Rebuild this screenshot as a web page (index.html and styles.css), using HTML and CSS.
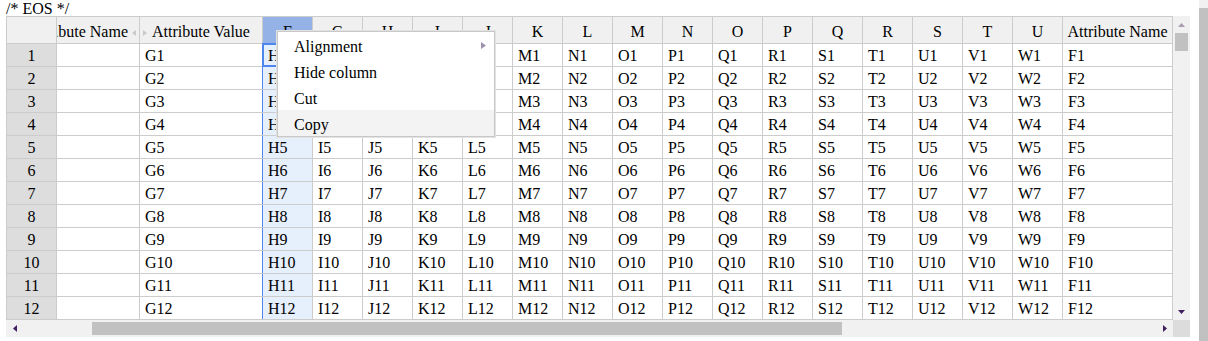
FILE: index.html
```html
<!DOCTYPE html>
<html lang="en">
<head>
    <meta charset="UTF-8">
    <title>EOS sheet</title>
    <meta name="viewport" content="width=device-width, initial-scale=1.0">
    <link rel="stylesheet" href="styles.css">
</head>
<body>
    <div class="page">
        <div class="note">/* EOS */</div>
        <div class="sheet-wrap">
            <div class="sheet">
                <div class="row">
                    <div class="cell colhead corner-head"></div>
                    <div class="cell colhead clipped"><span>Attribute Name</span></div>
                    <div class="cell colhead">Attribute Value</div>
                    <div class="cell colhead sel-head">F</div>
                    <div class="cell colhead">G</div>
                    <div class="cell colhead">H</div>
                    <div class="cell colhead">I</div>
                    <div class="cell colhead">J</div>
                    <div class="cell colhead">K</div>
                    <div class="cell colhead">L</div>
                    <div class="cell colhead">M</div>
                    <div class="cell colhead">N</div>
                    <div class="cell colhead">O</div>
                    <div class="cell colhead">P</div>
                    <div class="cell colhead">Q</div>
                    <div class="cell colhead">R</div>
                    <div class="cell colhead">S</div>
                    <div class="cell colhead">T</div>
                    <div class="cell colhead">U</div>
                    <div class="cell colhead">Attribute Name</div>
                </div>
                <div class="row">
                    <div class="cell rowhead">1</div><div class="cell"></div><div class="cell">G1</div><div class="cell sel active">H1</div><div class="cell">I1</div><div class="cell">J1</div><div class="cell">K1</div><div class="cell">L1</div><div class="cell">M1</div><div class="cell">N1</div><div class="cell">O1</div><div class="cell">P1</div><div class="cell">Q1</div><div class="cell">R1</div><div class="cell">S1</div><div class="cell">T1</div><div class="cell">U1</div><div class="cell">V1</div><div class="cell">W1</div><div class="cell">F1</div>
                </div>
                <div class="row">
                    <div class="cell rowhead">2</div><div class="cell"></div><div class="cell">G2</div><div class="cell sel">H2</div><div class="cell">I2</div><div class="cell">J2</div><div class="cell">K2</div><div class="cell">L2</div><div class="cell">M2</div><div class="cell">N2</div><div class="cell">O2</div><div class="cell">P2</div><div class="cell">Q2</div><div class="cell">R2</div><div class="cell">S2</div><div class="cell">T2</div><div class="cell">U2</div><div class="cell">V2</div><div class="cell">W2</div><div class="cell">F2</div>
                </div>
                <div class="row">
                    <div class="cell rowhead">3</div><div class="cell"></div><div class="cell">G3</div><div class="cell sel">H3</div><div class="cell">I3</div><div class="cell">J3</div><div class="cell">K3</div><div class="cell">L3</div><div class="cell">M3</div><div class="cell">N3</div><div class="cell">O3</div><div class="cell">P3</div><div class="cell">Q3</div><div class="cell">R3</div><div class="cell">S3</div><div class="cell">T3</div><div class="cell">U3</div><div class="cell">V3</div><div class="cell">W3</div><div class="cell">F3</div>
                </div>
                <div class="row">
                    <div class="cell rowhead">4</div><div class="cell"></div><div class="cell">G4</div><div class="cell sel">H4</div><div class="cell">I4</div><div class="cell">J4</div><div class="cell">K4</div><div class="cell">L4</div><div class="cell">M4</div><div class="cell">N4</div><div class="cell">O4</div><div class="cell">P4</div><div class="cell">Q4</div><div class="cell">R4</div><div class="cell">S4</div><div class="cell">T4</div><div class="cell">U4</div><div class="cell">V4</div><div class="cell">W4</div><div class="cell">F4</div>
                </div>
                <div class="row">
                    <div class="cell rowhead">5</div><div class="cell"></div><div class="cell">G5</div><div class="cell sel">H5</div><div class="cell">I5</div><div class="cell">J5</div><div class="cell">K5</div><div class="cell">L5</div><div class="cell">M5</div><div class="cell">N5</div><div class="cell">O5</div><div class="cell">P5</div><div class="cell">Q5</div><div class="cell">R5</div><div class="cell">S5</div><div class="cell">T5</div><div class="cell">U5</div><div class="cell">V5</div><div class="cell">W5</div><div class="cell">F5</div>
                </div>
                <div class="row">
                    <div class="cell rowhead">6</div><div class="cell"></div><div class="cell">G6</div><div class="cell sel">H6</div><div class="cell">I6</div><div class="cell">J6</div><div class="cell">K6</div><div class="cell">L6</div><div class="cell">M6</div><div class="cell">N6</div><div class="cell">O6</div><div class="cell">P6</div><div class="cell">Q6</div><div class="cell">R6</div><div class="cell">S6</div><div class="cell">T6</div><div class="cell">U6</div><div class="cell">V6</div><div class="cell">W6</div><div class="cell">F6</div>
                </div>
                <div class="row">
                    <div class="cell rowhead">7</div><div class="cell"></div><div class="cell">G7</div><div class="cell sel">H7</div><div class="cell">I7</div><div class="cell">J7</div><div class="cell">K7</div><div class="cell">L7</div><div class="cell">M7</div><div class="cell">N7</div><div class="cell">O7</div><div class="cell">P7</div><div class="cell">Q7</div><div class="cell">R7</div><div class="cell">S7</div><div class="cell">T7</div><div class="cell">U7</div><div class="cell">V7</div><div class="cell">W7</div><div class="cell">F7</div>
                </div>
                <div class="row">
                    <div class="cell rowhead">8</div><div class="cell"></div><div class="cell">G8</div><div class="cell sel">H8</div><div class="cell">I8</div><div class="cell">J8</div><div class="cell">K8</div><div class="cell">L8</div><div class="cell">M8</div><div class="cell">N8</div><div class="cell">O8</div><div class="cell">P8</div><div class="cell">Q8</div><div class="cell">R8</div><div class="cell">S8</div><div class="cell">T8</div><div class="cell">U8</div><div class="cell">V8</div><div class="cell">W8</div><div class="cell">F8</div>
                </div>
                <div class="row">
                    <div class="cell rowhead">9</div><div class="cell"></div><div class="cell">G9</div><div class="cell sel">H9</div><div class="cell">I9</div><div class="cell">J9</div><div class="cell">K9</div><div class="cell">L9</div><div class="cell">M9</div><div class="cell">N9</div><div class="cell">O9</div><div class="cell">P9</div><div class="cell">Q9</div><div class="cell">R9</div><div class="cell">S9</div><div class="cell">T9</div><div class="cell">U9</div><div class="cell">V9</div><div class="cell">W9</div><div class="cell">F9</div>
                </div>
                <div class="row">
                    <div class="cell rowhead">10</div><div class="cell"></div><div class="cell">G10</div><div class="cell sel">H10</div><div class="cell">I10</div><div class="cell">J10</div><div class="cell">K10</div><div class="cell">L10</div><div class="cell">M10</div><div class="cell">N10</div><div class="cell">O10</div><div class="cell">P10</div><div class="cell">Q10</div><div class="cell">R10</div><div class="cell">S10</div><div class="cell">T10</div><div class="cell">U10</div><div class="cell">V10</div><div class="cell">W10</div><div class="cell">F10</div>
                </div>
                <div class="row">
                    <div class="cell rowhead">11</div><div class="cell"></div><div class="cell">G11</div><div class="cell sel">H11</div><div class="cell">I11</div><div class="cell">J11</div><div class="cell">K11</div><div class="cell">L11</div><div class="cell">M11</div><div class="cell">N11</div><div class="cell">O11</div><div class="cell">P11</div><div class="cell">Q11</div><div class="cell">R11</div><div class="cell">S11</div><div class="cell">T11</div><div class="cell">U11</div><div class="cell">V11</div><div class="cell">W11</div><div class="cell">F11</div>
                </div>
                <div class="row">
                    <div class="cell rowhead">12</div><div class="cell"></div><div class="cell">G12</div><div class="cell sel">H12</div><div class="cell">I12</div><div class="cell">J12</div><div class="cell">K12</div><div class="cell">L12</div><div class="cell">M12</div><div class="cell">N12</div><div class="cell">O12</div><div class="cell">P12</div><div class="cell">Q12</div><div class="cell">R12</div><div class="cell">S12</div><div class="cell">T12</div><div class="cell">U12</div><div class="cell">V12</div><div class="cell">W12</div><div class="cell">F12</div>
                </div>
            </div>

            <!-- vertical scrollbar -->
            <div class="vscroll">
                <div class="sb-btn">
                    <svg width="7" height="4" viewBox="0 0 7 4"><path d="M0 4 L3.5 0 L7 4 Z" fill="#a89db2"/></svg>
                </div>
                <div class="vtrack"><div class="vthumb"></div></div>
                <div class="sb-btn">
                    <svg width="7" height="4" viewBox="0 0 7 4"><path d="M0 0 L7 0 L3.5 4 Z" fill="#3f1f5f"/></svg>
                </div>
            </div>

            <!-- horizontal scrollbar -->
            <div class="hscroll">
                <div class="sb-btn">
                    <svg width="4" height="7" viewBox="0 0 4 7"><path d="M4 0 L4 7 L0 3.5 Z" fill="#3f1f5f"/></svg>
                </div>
                <div class="htrack"><div class="hthumb"></div></div>
                <div class="sb-btn">
                    <svg width="4" height="7" viewBox="0 0 4 7"><path d="M0 0 L4 3.5 L0 7 Z" fill="#3f1f5f"/></svg>
                </div>
            </div>
            <div class="sb-corner"></div>

            <!-- column move marker -->
            <svg class="move-marker" width="17" height="6" viewBox="0 0 17 6">
                <path d="M1 3 L5 0 L5 6 Z" fill="#c9c9c9"/>
                <path d="M12 0 L16 3 L12 6 Z" fill="#c9c9c9"/>
            </svg>

            <ul class="context-menu">
                <li>Alignment
                    <svg class="submenu" width="5" height="7" viewBox="0 0 5 7"><path d="M0 0 L5 3.5 L0 7 Z" fill="#9d93ae"/></svg>
                </li>
                <li>Hide column</li>
                <li>Cut</li>
                <li class="hover">Copy</li>
            </ul>
        </div>
    </div>
    <div class="page-scroll"><div class="page-thumb"></div></div>
</body>
</html>
```

FILE: styles.css
```css
:root {
    --grid: #cccccc;
    --head-bg: #f0f0f0;
    --rowhead-bg: #dddddd;
    --sel-bg: #e6effc;
    --sel-head: #94b2e6;
    --sel-line: #4f86ec;
    --track: #f1f1f1;
    --thumb: #c1c1c1;
}
html, body {
    margin: 0; padding: 0;
    background: #fff;
    color: #000;
    font-family: 'Liberation Serif', 'Times New Roman', serif;
    font-size: 16px;
}
body {
    display: flex;
    height: 341px;
    overflow: hidden;
}
.page {
    flex: 1;
    padding-left: 6px;
}
.note {
    height: 16px;
    line-height: 17px;
}
.sheet-wrap {
    position: relative;
    display: grid;
    grid-template-columns: 1167px 17px;
    grid-template-rows: 304px 17px;
}
.sheet {
    display: grid;
    grid-template-columns: 49px 82px 122px repeat(16, 49px) 109px;
    grid-template-rows: 26px repeat(12, 22px);
    gap: 1px;
    background: var(--grid);
    border: 1px solid var(--grid);
}
.row { display: contents; }
.cell {
    background: #fff;
    line-height: 22px;
    padding: 1px 5px 0;
    white-space: nowrap;
    overflow: hidden;
}
.colhead {
    background: var(--head-bg);
    line-height: 26px;
    text-align: center;
    padding: 2px 0 0;
}
.clipped {
    display: flex;
    justify-content: flex-end;
    padding-right: 11px;
}
.rowhead {
    background: var(--rowhead-bg);
    text-align: center;
    padding: 1px 0 0;
}
.sel-head {
    background: var(--sel-head);
}
.sel {
    background: var(--sel-bg);
    box-shadow: -1px 0 0 var(--sel-line);
}
.sel.active {
    box-shadow: 0 0 0 1px var(--sel-line), inset 0 0 0 1px var(--sel-line);
}

/* scrollbars */
.vscroll, .hscroll {
    background: var(--track);
    display: flex;
}
.vscroll { flex-direction: column; }
.sb-btn {
    flex: 0 0 17px;
    height: 17px;
    display: flex;
    align-items: center;
    justify-content: center;
}
.vtrack { flex: 1; padding: 0 2px; }
.vthumb {
    height: 18px;
    background: var(--thumb);
}
.htrack {
    flex: 1;
    padding: 2px 0;
}
.hthumb {
    margin-left: 69px;
    width: 750px;
    height: 13px;
    background: var(--thumb);
}
.sb-corner { background: #dcdcdc; }
.page-scroll {
    width: 9px;
    padding-top: 8px;
    background: var(--track);
}
.page-thumb {
    height: 100%;
    background: var(--thumb);
}

.move-marker {
    position: absolute;
    left: 125px;
    top: 14px;
}

/* context menu */
.context-menu {
    position: absolute;
    left: 271px;
    top: 15px;
    width: 218px;
    box-sizing: border-box;
    margin: 0;
    padding: 0;
    list-style: none;
    background: #fff;
    border: 1px solid #c8c8c8;
    box-shadow: 0 0 0 1px #e2e2e2;
}
.context-menu li {
    display: flex;
    align-items: center;
    box-sizing: border-box;
    height: 26px;
    padding: 3px 8px 0 16px;
}
.context-menu li.hover { background: #f3f3f3; }
.context-menu .submenu { margin-left: auto; margin-top: -2px; }
```
